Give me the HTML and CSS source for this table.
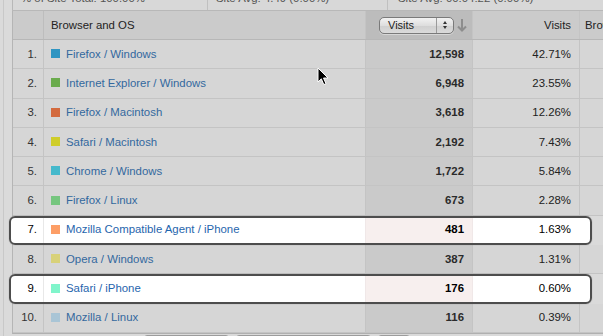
FILE: index.html
```html
<!DOCTYPE html>
<html>
<head>
<meta charset="utf-8">
<link rel="stylesheet" href="styles.css">
</head>
<body>
<div class="page">
  <div class="summary">
    <div class="sum-cell s1"><span>% of Site Total: 100.00%</span></div>
    <div class="sum-cell s2"><span>Site Avg: 4.49 (0.00%)</span></div>
    <div class="sum-cell s3"><span>Site Avg: 00:04:22 (0.00%)</span></div>
  </div>
  <div class="table">
    <div class="row head">
      <div class="c c1"></div>
      <div class="c c2">Browser and OS</div>
      <div class="c c3 sorted">
        <div class="select"><span class="sel-label">Visits</span><span class="sel-arrows"><i class="up"></i><i class="down"></i></span></div>
        <svg class="sort-arrow" width="10" height="14" viewBox="0 0 10 14"><path d="M5 1 V12.5 M1 8.5 L5 12.5 L9 8.5" fill="none" stroke="#8d8d8d" stroke-width="2"/></svg>
      </div>
      <div class="c c4">Visits</div>
      <div class="c c5">Browser</div>
    </div>

    <div class="row"><div class="c c1">1.</div><div class="c c2"><i class="sw" style="background:#2f95c2"></i><a>Firefox / Windows</a></div><div class="c c3">12,598</div><div class="c c4">42.71%</div><div class="c c5"></div></div>
    <div class="row"><div class="c c1">2.</div><div class="c c2"><i class="sw" style="background:#6aab4d"></i><a>Internet Explorer / Windows</a></div><div class="c c3">6,948</div><div class="c c4">23.55%</div><div class="c c5"></div></div>
    <div class="row"><div class="c c1">3.</div><div class="c c2"><i class="sw" style="background:#d36a3e"></i><a>Firefox / Macintosh</a></div><div class="c c3">3,618</div><div class="c c4">12.26%</div><div class="c c5"></div></div>
    <div class="row"><div class="c c1">4.</div><div class="c c2"><i class="sw" style="background:#cfcd2a"></i><a>Safari / Macintosh</a></div><div class="c c3">2,192</div><div class="c c4">7.43%</div><div class="c c5"></div></div>
    <div class="row"><div class="c c1">5.</div><div class="c c2"><i class="sw" style="background:#45b9cc"></i><a>Chrome / Windows</a></div><div class="c c3">1,722</div><div class="c c4">5.84%</div><div class="c c5"></div></div>
    <div class="row"><div class="c c1">6.</div><div class="c c2"><i class="sw" style="background:#76c67f"></i><a>Firefox / Linux</a></div><div class="c c3">673</div><div class="c c4">2.28%</div><div class="c c5"></div></div>
    <div class="row hl hl-a"><div class="c c1">7.</div><div class="c c2"><i class="sw" style="background:#fd9e66"></i><a>Mozilla Compatible Agent / iPhone</a></div><div class="c c3">481</div><div class="c c4">1.63%</div><div class="c c5"></div></div>
    <div class="row"><div class="c c1">8.</div><div class="c c2"><i class="sw" style="background:#d8d179"></i><a>Opera / Windows</a></div><div class="c c3">387</div><div class="c c4">1.31%</div><div class="c c5"></div></div>
    <div class="row hl hl-b"><div class="c c1">9.</div><div class="c c2"><i class="sw" style="background:#80f5cb"></i><a>Safari / iPhone</a></div><div class="c c3">176</div><div class="c c4">0.60%</div><div class="c c5"></div></div>
    <div class="row"><div class="c c1">10.</div><div class="c c2"><i class="sw" style="background:#a9c5d6"></i><a>Mozilla / Linux</a></div><div class="c c3">116</div><div class="c c4">0.39%</div><div class="c c5"></div></div>
  </div>
  <div class="footer">
    <div class="fbox f1"></div>
    <div class="fbox f2"></div>
    <div class="fbox f3"></div>
  </div>
</div>
<svg class="cursor" width="12" height="19" viewBox="0 0 12 19"><path d="M1 1 L1 15 L4.3 11.8 L6.8 17.6 L9 16.7 L6.5 11 L11 11 Z" fill="#000" stroke="#fff" stroke-width="1"/></svg>
</body>
</html>
```
FILE: styles.css
```css
html, body {
  margin: 0;
  padding: 0;
  overflow: hidden;
}
body {
  width: 603px;
  height: 336px;
  background: #dadada;
  font-family: "Liberation Sans", Arial, sans-serif;
  font-size: 11.4px;
  color: #222;
  position: relative;
}
.page {
  margin-left: 3px;
  border-left: 1px solid #c8c8c8;
  padding-left: 8px;
  width: 720px;
}
.summary {
  height: 10px;
  border-bottom: 1px solid #b8b8b8;
  border-left: 1px solid #b8b8b8;
  overflow: hidden;
  display: grid;
  grid-template-columns: 194px 180px 1fr;
  color: #555;
  background: #d8d8d8;
}
.sum-cell span {
  display: block;
  margin-top: -8px;
  line-height: 13px;
  white-space: nowrap;
}
.s1 { padding-left: 8px; }
.s2 { border-left: 1px solid #c0c0c0; padding-left: 8px; }
.s3 { border-left: 1px solid #c0c0c0; padding-left: 10px; }

.table {
  border-left: 1px solid #b5b5b5;
  border-bottom: 1px solid #b0b0b0;
}
.row {
  display: grid;
  grid-template-columns: 30px 322px 107px 107px 120px;
  height: 29.3px;
  box-sizing: border-box;
  border-bottom: 1px solid #c4c4c4;
  background: #d6d6d6;
  position: relative;
}
.row.head {
  height: 29px;
  background: #cbcbcb;
  border-bottom: 1px solid #b7b7b7;
}
.c {
  display: flex;
  align-items: center;
  white-space: nowrap;
  overflow: hidden;
  box-sizing: border-box;
  padding-bottom: 1px;
}
.c1 { justify-content: flex-end; padding-right: 6px; color: #333; }
.c2 { border-left: 1px solid #c4c4c4; padding-left: 7px; }
.c3 { border-left: 1px solid #c4c4c4; justify-content: flex-end; padding-right: 8px; font-weight: bold; background: #cacaca; color: #2a2a2a; }
.c4 { border-left: 1px solid #c4c4c4; justify-content: flex-end; padding-right: 8px; }
.c5 { border-left: 1px solid #c4c4c4; padding-left: 5px; }
.head .c { color: #222; }
.head .c2 { border-left-color: #bdbdbd; }
.head .c3.sorted {
  background: #bcbcbc;
  justify-content: flex-start;
  padding: 0 0 0 13px;
  font-weight: normal;
  gap: 3px;
}
.head .c4 { padding-right: 8px; }

.sw {
  width: 9px;
  height: 9px;
  margin-right: 6px;
  flex: none;
}
a {
  color: #33689e;
  text-decoration: none;
}

.select {
  width: 75px;
  height: 17px;
  box-sizing: border-box;
  border: 1px solid #7a7a7a;
  border-radius: 5px;
  background: linear-gradient(#f2f2f2, #dedede 50%, #cfcfcf 51%, #dadada);
  display: flex;
  align-items: center;
  box-shadow: 0 1px 0 rgba(255,255,255,0.4);
}
.sel-label {
  flex: 1;
  padding-left: 8px;
  font-size: 11px;
  color: #222;
}
.sel-arrows {
  width: 16px;
  height: 100%;
  border-left: 1px solid #9a9a9a;
  display: flex;
  flex-direction: column;
  align-items: center;
  justify-content: center;
  gap: 2px;
}
.sel-arrows i {
  width: 0;
  height: 0;
  border-left: 2.5px solid transparent;
  border-right: 2.5px solid transparent;
}
.sel-arrows .up { border-bottom: 3px solid #333; }
.sel-arrows .down { border-top: 3px solid #333; }
.sort-arrow {
  flex: none;
}

.row.hl {
  background: transparent;
  border-bottom-color: transparent;
  z-index: 1;
}
.row.hl::before,
.row.hl::after {
  content: "";
  position: absolute;
  left: -4px;
  width: 583px;
  top: 0;
  bottom: -1px;
  box-sizing: border-box;
  border-radius: 6px;
}
.row.hl::before { background: #fff; z-index: 0; }
.row.hl::after {
  border: 2px solid #4d4d4d;
  box-shadow: 0 0 1px rgba(0,0,0,0.4);
  z-index: 2;
}
.hl-a::before, .hl-a::after { top: 1px; bottom: -2px; }
.hl-b::before, .hl-b::after { top: -3px; bottom: 2px; }
.row.hl .c { position: relative; z-index: 1; background: transparent; border-left-color: #e8e8e8; color: #000; }
.row.hl .c3 { background: #f7efee; border-left-color: #f0e8e8; }
.row.hl .c4 { border-left-color: #f0e8e8; }
.row.hl .c5 { border-left-color: transparent; }
.row.hl a { color: #1f65ad; }

.footer {
  display: flex;
  padding-left: 132px;
  gap: 7px;
  padding-top: 1px;
}
.fbox {
  height: 10px;
  border: 1px solid #9c9c9c;
  border-radius: 3px;
  background: #e2e2e2;
}
.f1 { width: 83px; }
.f2 { width: 133px; }
.f3 { width: 30px; }

.cursor {
  position: absolute;
  left: 317px;
  top: 67px;
}
```
